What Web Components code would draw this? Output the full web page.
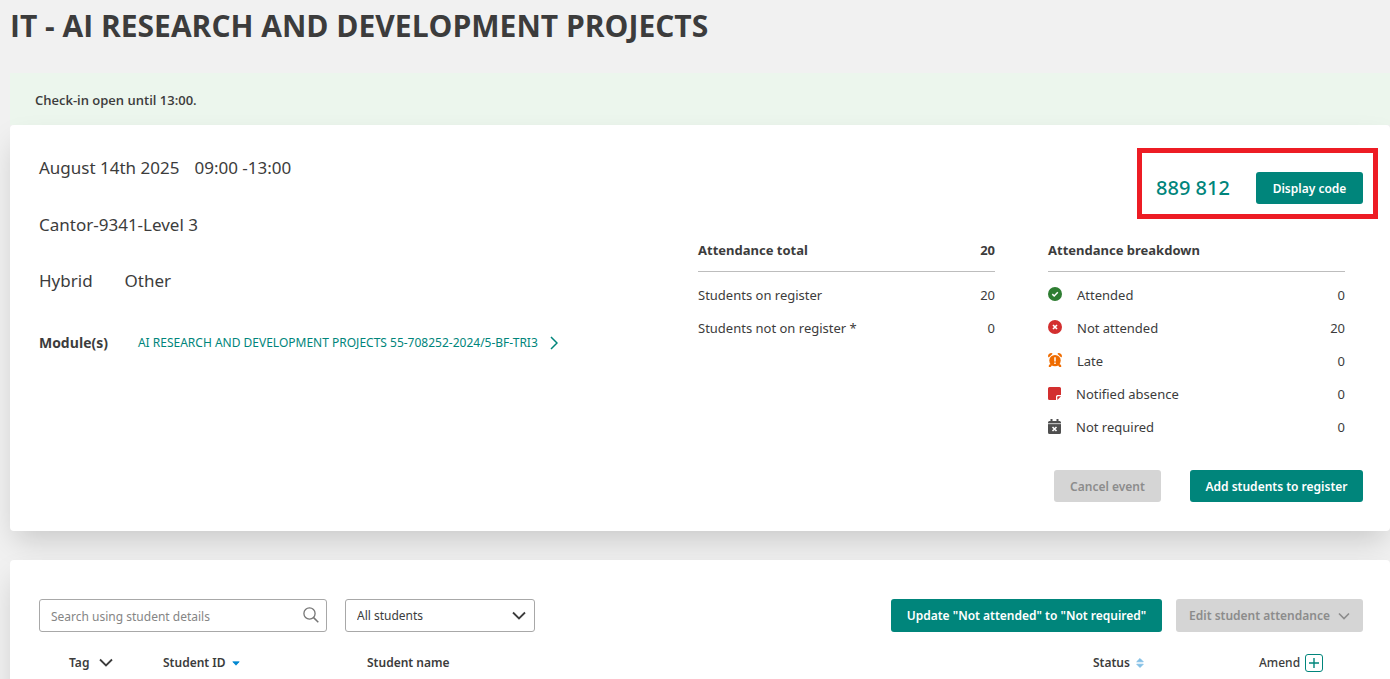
<!DOCTYPE html>
<html lang="en">
<head>
<meta charset="utf-8">
<meta name="viewport" content="width=device-width, initial-scale=1">
<title>IT - AI Research and Development Projects</title>
<style>
  html { background: #f1f1f1; }
  body {
    margin: 0;
    overflow-x: hidden;
    font: 13px/20px "Noto Sans", "Open Sans", sans-serif;
    color: #3c3c3c;
    --teal: #00857b;
    --ink: #3c3c3c;
  }
</style>
</head>
<body>
<register-page></register-page>

<script>
const define = (name, html, setup) => customElements.define(name, class extends HTMLElement {
  constructor() {
    super();
    const template = document.createElement('template');
    template.innerHTML = html;
    this.attachShadow({ mode: 'open' }).append(template.content.cloneNode(true));
  }
  connectedCallback() { if (setup) setup(this, this.shadowRoot); }
});

/* Icons */
const icons = {
  attended: ['0 0 14 14', 14, '<circle cx="7" cy="7" r="7" fill="#2e7d32"/><path d="M4.3 7.1 6.2 9l3.6-3.7" fill="none" stroke="#fff" stroke-width="1.5"/>'],
  absent: ['0 0 14 14', 14, '<circle cx="7" cy="7" r="7" fill="#d32f2f"/><path d="m5 5 4 4m0-4L5 9" fill="none" stroke="#fff" stroke-width="1.6"/>'],
  late: ['0 0 14 14', 14, '<g fill="#ef6c00"><circle cx="7" cy="7.6" r="5.7"/><path d="M0 3.6C0 1.4 1.4 0 3.6 0l1 .7L.8 4.4ZM14 3.6C14 1.4 12.6 0 10.4 0l-1 .7 3.8 3.7Z"/><path d="m2.2 10.8 1.8 1.7L2.5 14H.8v-1.5Zm9.6 0L10 12.5l1.5 1.5h1.7v-1.5Z"/></g><path d="M7 4.2v4.3M7 9.6v1.5" stroke="#fff" stroke-width="1.5"/>'],
  note: ['0 0 13 13', 13, '<path d="M1.5 0h10A1.5 1.5 0 0 1 13 1.5V8H9.5A1.5 1.5 0 0 0 8 9.5V13H1.5A1.5 1.5 0 0 1 0 11.5v-10A1.5 1.5 0 0 1 1.5 0Z" fill="#d32f2f"/><path d="M9.3 13V10.3a1 1 0 0 1 1-1H13Z" fill="#d32f2f"/>'],
  calendar: ['0 0 13 15', 13, '<path d="M0 3.5A1.5 1.5 0 0 1 1.5 2H2.5V0H4.5V2h4V0h2v2h1A1.5 1.5 0 0 1 13 3.5v10A1.5 1.5 0 0 1 11.5 15h-10A1.5 1.5 0 0 1 0 13.5Z" fill="#4f4f4f"/><path d="M0 4.6h13" stroke="#bdbdbd" stroke-width="1.2"/><path d="m4.5 8 4 4m0-4-4 4" stroke="#fff" stroke-width="1.6"/>'],
  next: ['0 0 8 14', 8, '<path d="m1 1 6 6-6 6" fill="none" stroke="currentColor" stroke-width="1.5"/>'],
  down: ['0 0 14 9', 14, '<path d="m1 1.5 6 6 6-6" fill="none" stroke="currentColor" stroke-width="1.8"/>'],
  'down-small': ['0 0 12 8', 12, '<path d="m1 1.5 5 5 5-5" fill="none" stroke="currentColor" stroke-width="1.6"/>'],
  search: ['0 0 16 16', 16, '<circle cx="6.5" cy="6.5" r="5.6" fill="none" stroke="currentColor" stroke-width="1.3"/><path d="m10.6 10.6 4.7 4.7" stroke="currentColor" stroke-width="1.5"/>'],
  caret: ['0 0 8 7', 8, '<path d="M.8 2.8h6.4L4 6.2Z" fill="#0288d1" stroke="#0288d1" stroke-width=".8" stroke-linejoin="round"/>'],
  sort: ['0 0 8 10', 8, '<path d="M4 .5 7.3 3.8H.7ZM4 9.5.7 6.2h6.6Z" fill="#81bfe6" stroke="#81bfe6" stroke-width=".8" stroke-linejoin="round"/>'],
  plus: ['0 0 18 18', 18, '<rect x=".5" y=".5" width="17" height="17" rx="2.5" fill="#fff" stroke="#00857b"/><path d="M9 4v10M4 9h10" stroke="#00857b" stroke-width="1.4"/>']
};
define('app-icon', '<style>:host{display:inline-flex;flex:none}svg{display:block}</style>', (host, root) => {
  const [box, width, body] = icons[host.getAttribute('name')];
  const holder = document.createElement('template');
  holder.innerHTML = `<svg viewBox="${box}" width="${width}" aria-hidden="true">${body}</svg>`;
  root.append(holder.content);
});

/* Filled push button; "disabled" greys it out */
define('app-button', `
<style>
  :host { display: inline-flex; flex: none; }
  button {
    display: flex; align-items: center; justify-content: center; gap: 8px;
    box-sizing: border-box; width: 100%; height: var(--button-height, 32px); padding: 2px 12px 0;
    border: 0; border-radius: 3px; background: var(--teal); color: #fff;
    font: 600 12px/20px "Noto Sans", "Open Sans", sans-serif; white-space: nowrap;
  }
  button:disabled { background: #d5d5d5; color: #8c8c8c; }
</style>
<button type="button"><slot></slot></button>`, (host, root) => {
  root.querySelector('button').disabled = host.hasAttribute('disabled');
});

define('app-card', `
<style>
  :host { display: block; background: #fff; border-radius: 4px; box-shadow: 0 14px 28px -5px rgba(0,0,0,.17); }
</style>
<slot></slot>`);

define('check-in-banner', `
<style>
  :host { display: block; padding: 17px 25px 15px; background: #ecf6ed; font: 600 13px/20px "Open Sans", "Noto Sans", sans-serif; }
</style>
<slot></slot>`);

define('event-details', `
<style>
  :host { display: block; padding-top: 8px; font-size: 17px; line-height: 24px; }
  p { margin: 0 0 32px; display: flex; gap: 32px; }
  p.when { gap: 15px; margin-bottom: 33px; }
  .modules { display: flex; align-items: center; gap: 30px; margin-top: 38px; }
  strong { font: 700 14px/24px "Open Sans", "Noto Sans", sans-serif; }
  a { display: flex; align-items: center; gap: 12px; color: var(--teal); font-size: 12px; text-decoration: none; }
</style>
<p class="when"><span>August 14th 2025</span><span>09:00 -13:00</span></p>
<p>Cantor-9341-Level 3</p>
<p><span>Hybrid</span><span>Other</span></p>
<div class="modules"><strong>Module(s)</strong>
  <a href="#module"><span>AI RESEARCH AND DEVELOPMENT PROJECTS 55-708252-2024/5-BF-TRI3</span><app-icon name="next"></app-icon></a>
</div>`);

define('code-panel', `
<style>
  :host { display: flex; align-items: center; justify-content: space-between; padding: 19px 10px 10px 14px; border: 5px solid #ed1c24; }
  output { color: var(--teal); font-size: 20px; font-weight: 500; line-height: 32px; white-space: nowrap; }
  app-button { width: 107px; }
</style>
<output>889 812</output><app-button>Display code</app-button>`);

const tableStyle = `
<style>
  :host { display: block; }
  table { width: 100%; border-collapse: collapse; }
  th, td { padding: 0; text-align: left; height: 33px; font-weight: 400; }
  thead th { height: 39px; padding-bottom: 2px; font-weight: 700; border-bottom: 1px solid #bdbdbd; }
  tbody::before { content: ""; display: table-row; height: 7px; }
  th:last-child:not(:first-child), td:last-child { text-align: right; }
  .label { display: flex; align-items: center; gap: 15px; }
  app-icon { margin-bottom: 2px; }
</style>`;
define('attendance-total', tableStyle + `
<table>
  <thead><tr><th scope="col">Attendance total</th><th scope="col">20</th></tr></thead>
  <tbody>
    <tr><th scope="row">Students on register</th><td>20</td></tr>
    <tr><th scope="row">Students not on register *</th><td>0</td></tr>
  </tbody>
</table>`);
define('attendance-breakdown', tableStyle + `
<table>
  <thead><tr><th scope="col" colspan="2">Attendance breakdown</th></tr></thead>
  <tbody>
    <tr><th scope="row"><span class="label"><app-icon name="attended"></app-icon>Attended</span></th><td>0</td></tr>
    <tr><th scope="row"><span class="label"><app-icon name="absent"></app-icon>Not attended</span></th><td>20</td></tr>
    <tr><th scope="row"><span class="label"><app-icon name="late"></app-icon>Late</span></th><td>0</td></tr>
    <tr><th scope="row"><span class="label"><app-icon name="note"></app-icon>Notified absence</span></th><td>0</td></tr>
    <tr><th scope="row"><span class="label"><app-icon name="calendar"></app-icon>Not required</span></th><td>0</td></tr>
  </tbody>
</table>`);

define('event-summary', `
<style>
  :host { display: grid; grid-template-columns: 659fr 680fr; padding: 23px 12px 29px 29px; }
  .side { display: flex; flex-direction: column; }
  code-panel { align-self: flex-end; width: 207px; }
  .stats { display: grid; grid-template-columns: 1fr 1fr; gap: 53px; align-items: start; margin: 11px 33px 0 0; }
  .actions { display: flex; justify-content: flex-end; gap: 29px; margin: 26px 15px 0 0; }
  .cancel { width: 107px; }
  .add { width: 173px; }
</style>
<event-details></event-details>
<div class="side">
  <code-panel></code-panel>
  <div class="stats"><attendance-total></attendance-total><attendance-breakdown></attendance-breakdown></div>
  <div class="actions"><app-button class="cancel" disabled>Cancel event</app-button><app-button class="add">Add students to register</app-button></div>
</div>`);

define('register-toolbar', `
<style>
  :host { display: flex; gap: 18px; --button-height: 33px; }
  .field { display: grid; align-items: center; width: 288px; }
  .field.filter { width: 190px; }
  .field > * { grid-area: 1 / 1; }
  .field app-icon { justify-self: end; margin-right: 8px; pointer-events: none; color: #757575; }
  .filter app-icon { color: var(--ink); margin-right: 9px; }
  input, select {
    appearance: none; box-sizing: border-box; width: 100%; height: 33px; margin: 0; padding: 2px 11px 0;
    border: 1px solid #a8a8a8; border-radius: 3px; background: #fff; color: var(--ink);
    font: 12px/20px "Noto Sans", "Open Sans", sans-serif;
  }
  input::placeholder { color: #858585; opacity: 1; }
  .actions { display: flex; gap: 14px; margin-left: auto; }
  .update { width: 271px; }
  .edit { width: 187px; }
</style>
<div class="field"><input type="search" aria-label="Search using student details" placeholder="Search using student details"><app-icon name="search"></app-icon></div>
<div class="field filter"><select aria-label="Student filter"><option>All students</option></select><app-icon name="down"></app-icon></div>
<div class="actions"><app-button class="update">Update "Not attended" to "Not required"</app-button><app-button class="edit" disabled>Edit student attendance <app-icon name="down-small"></app-icon></app-button></div>`);

define('student-table', `
<style>
  :host { display: block; margin-top: 15px; }
  table { width: 100%; table-layout: fixed; border-collapse: collapse; }
  th { height: 32px; padding: 0; text-align: left; font-weight: 600; font-size: 12px; }
  .tag { width: 94px; padding-left: 30px; }
  .id { width: 204px; }
  .status { width: 166px; }
  .amend { width: 104px; }
  button { display: flex; align-items: center; gap: 6px; padding: 0; border: 0; background: none; color: inherit; font: inherit; }
  .tag button { gap: 10px; }
  .amend button { gap: 5px; font-weight: 500; }
</style>
<table><thead><tr>
  <th scope="col" class="tag"><button type="button">Tag <app-icon name="down"></app-icon></button></th>
  <th scope="col" class="id"><button type="button">Student ID <app-icon name="caret"></app-icon></button></th>
  <th scope="col">Student name</th>
  <th scope="col" class="status"><button type="button">Status <app-icon name="sort"></app-icon></button></th>
  <th scope="col" class="amend"><button type="button">Amend <app-icon name="plus"></app-icon></button></th>
</tr></thead></table>`);

define('register-page', `
<style>
  :host { display: block; padding: 0 0 0 10px; }
  h1 { margin: 0; padding: 4px 0 25px; font: 700 30px/44px "Open Sans", "Noto Sans", sans-serif; }
  .students { margin-top: 29px; padding: 39px 27px 29px 29px; }
</style>
<main>
  <h1>IT - AI RESEARCH AND DEVELOPMENT PROJECTS</h1>
  <check-in-banner>Check-in open until 13:00.</check-in-banner>
  <app-card><event-summary></event-summary></app-card>
  <app-card class="students"><register-toolbar></register-toolbar><student-table></student-table></app-card>
</main>`);
</script>
</body>
</html>
